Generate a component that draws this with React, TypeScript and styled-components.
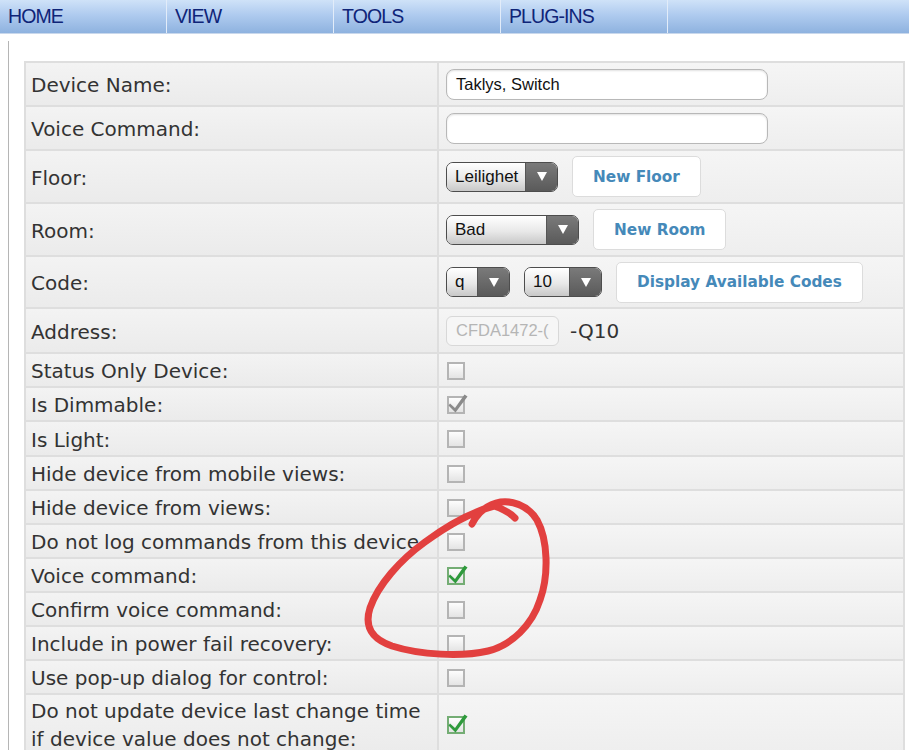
import React from 'react';
import styled, { createGlobalStyle } from 'styled-components';

const GlobalStyle = createGlobalStyle`
  html, body {
    margin: 0;
    padding: 0;
    background: #fff;
    font-family: "DejaVu Sans", Verdana, sans-serif;
  }
`;

const Page = styled.div`
  width: 909px;
  height: 750px;
  overflow: hidden;
  position: relative;
  background: #fff;
`;

const NavBar = styled.div`
  display: flex;
  height: 33px;
  background: linear-gradient(to bottom, #cfe2f8 0%, #afcbef 45%, #8eb2df 100%);
  border-bottom: 1px solid #c9d8ec;
`;

const NavItem = styled.div<{ $last?: boolean }>`
  box-sizing: border-box;
  width: ${p => (p.$last ? 'auto' : '167px')};
  flex: ${p => (p.$last ? '1' : 'none')};
  padding-left: 8px;
  display: flex;
  align-items: center;
  border-right: ${p => (p.$last ? 'none' : '1px solid #e2ecf9')};
  font-family: "Liberation Sans", Arial, sans-serif;
  font-size: 19.5px;
  letter-spacing: -0.9px;
  color: #0f2478;
`;

const Body = styled.div`
  margin: 7px 0 0 8px;
  border-left: 1px solid #b5b5b5;
  padding: 20px 0 0 15px;
  height: 720px;
`;

const FormTable = styled.table`
  width: 881px;
  border-collapse: collapse;
  table-layout: fixed;
`;

const Row = styled.tr<{ $h: number }>`
  height: ${p => p.$h}px;
`;

const LabelCell = styled.td`
  padding: 2px 0 0 5px;
  border: 2px solid #dedede;
  background: linear-gradient(to bottom, #f3f3f3 0%, #ebebeb 100%);
  font-size: 20px;
  line-height: 28px;
  color: #333;
  vertical-align: middle;
  white-space: nowrap;
`;

const ValueCell = styled.td`
  padding: 0 0 0 7px;
  border: 2px solid #dedede;
  background: linear-gradient(to bottom, #f5f5f5 0%, #eeeeee 100%);
  vertical-align: middle;
`;

const Controls = styled.div`
  display: flex;
  align-items: center;
  gap: 14px;
`;

const TextInput = styled.div<{ $disabled?: boolean; $w: number }>`
  width: ${p => p.$w}px;
  height: ${p => (p.$disabled ? 30 : 31)}px;
  box-sizing: border-box;
  border: 1px solid ${p => (p.$disabled ? '#d8d8d8' : '#b8b8b8')};
  border-radius: ${p => (p.$disabled ? '6px' : '8px')};
  background: ${p => (p.$disabled ? '#f6f6f6' : '#fff')};
  box-shadow: ${p => (p.$disabled ? 'none' : 'inset 0 1px 2px rgba(0,0,0,0.12)')};
  padding: 0 9px;
  display: flex;
  align-items: center;
  overflow: hidden;
  white-space: nowrap;
  font-family: "Liberation Sans", Arial, sans-serif;
  font-size: 16.5px;
  color: ${p => (p.$disabled ? '#b5b5b5' : '#111')};
`;

const Suffix = styled.span`
  font-size: 20px;
  color: #333;
  margin-left: -3px;
`;

const Select = styled.div<{ $w: number }>`
  width: ${p => p.$w}px;
  height: 30px;
  box-sizing: border-box;
  border: 1px solid #4d4d4d;
  border-radius: 7px;
  display: flex;
  overflow: hidden;
  font-family: "Liberation Sans", Arial, sans-serif;
  font-size: 17px;
  color: #111;
`;

const SelectText = styled.div`
  flex: 1;
  padding-left: 8px;
  display: flex;
  align-items: center;
  background: linear-gradient(to bottom, #ffffff 0%, #e8e8e8 55%, #c8c8c8 100%);
`;

const SelectArrow = styled.div`
  width: 31px;
  display: flex;
  align-items: center;
  justify-content: center;
  background: linear-gradient(to bottom, #7a7a7a 0%, #5a5a5a 100%);
  border-left: 1px solid #555;
  &::after {
    content: '';
    border-left: 5.5px solid transparent;
    border-right: 5.5px solid transparent;
    border-top: 9px solid #fff;
  }
`;

const Button = styled.div`
  height: 41px;
  box-sizing: border-box;
  padding: 0 20px;
  display: flex;
  align-items: center;
  background: #fff;
  border: 1px solid #dcdcdc;
  border-radius: 5px;
  font-family: "DejaVu Sans", Verdana, sans-serif;
  font-weight: bold;
  font-size: 15.3px;
  color: #4589b9;
  white-space: nowrap;
`;

const CheckSvg = styled.svg`
  display: block;
  margin-top: -3px;
`;

const Annotation = styled.svg`
  position: absolute;
  left: 0;
  top: 0;
  pointer-events: none;
`;

type CheckState = 'off' | 'grey' | 'green';

const Checkbox: React.FC<{ state: CheckState }> = ({ state }) => (
  <CheckSvg width="24" height="24" viewBox="0 0 24 24">
    <defs>
      <linearGradient id={`cb-${state}`} x1="0" y1="0" x2="0" y2="1">
        <stop offset="0" stopColor="#ffffff" />
        <stop offset="1" stopColor="#e2e2e2" />
      </linearGradient>
    </defs>
    <rect
      x="2"
      y="6"
      width="16"
      height="16"
      fill={`url(#cb-${state})`}
      stroke={state === 'green' ? '#74ad74' : '#b4b4b4'}
      strokeWidth="2"
    />
    {state !== 'off' && (
      <path
        d="M4 12.5 L9 17 L18.5 3.5 L21.5 5.5 L9.5 21.5 L2.5 14.5 Z"
        fill={state === 'green' ? '#2e9a3c' : '#8a8a8a'}
      />
    )}
  </CheckSvg>
);

const checkRows: { label: React.ReactNode; state: CheckState; h: number }[] = [
  { label: 'Status Only Device:', state: 'off', h: 34 },
  { label: 'Is Dimmable:', state: 'grey', h: 34 },
  { label: 'Is Light:', state: 'off', h: 35 },
  { label: 'Hide device from mobile views:', state: 'off', h: 34 },
  { label: 'Hide device from views:', state: 'off', h: 34 },
  { label: 'Do not log commands from this device', state: 'off', h: 34 },
  { label: 'Voice command:', state: 'green', h: 34 },
  { label: 'Confirm voice command:', state: 'off', h: 34 },
  { label: 'Include in power fail recovery:', state: 'off', h: 34 },
  { label: 'Use pop-up dialog for control:', state: 'off', h: 34 },
  {
    label: (
      <>
        Do not update device last change time
        <br />
        if device value does not change:
      </>
    ),
    state: 'green',
    h: 60,
  },
];

const App: React.FC = () => {
  return (
    <Page>
      <GlobalStyle />
      <NavBar>
        <NavItem>HOME</NavItem>
        <NavItem>VIEW</NavItem>
        <NavItem>TOOLS</NavItem>
        <NavItem>PLUG-INS</NavItem>
        <NavItem $last />
      </NavBar>
      <Body>
        <FormTable>
          <colgroup>
            <col style={{ width: 413 }} />
            <col />
          </colgroup>
          <tbody>
            <Row $h={44}>
              <LabelCell>Device Name:</LabelCell>
              <ValueCell>
                <TextInput $w={322}>Taklys, Switch</TextInput>
              </ValueCell>
            </Row>
            <Row $h={44}>
              <LabelCell>Voice Command:</LabelCell>
              <ValueCell>
                <TextInput $w={322} />
              </ValueCell>
            </Row>
            <Row $h={53}>
              <LabelCell>Floor:</LabelCell>
              <ValueCell>
                <Controls>
                  <Select $w={112}>
                    <SelectText>Leilighet</SelectText>
                    <SelectArrow />
                  </Select>
                  <Button>New Floor</Button>
                </Controls>
              </ValueCell>
            </Row>
            <Row $h={53}>
              <LabelCell>Room:</LabelCell>
              <ValueCell>
                <Controls>
                  <Select $w={133}>
                    <SelectText>Bad</SelectText>
                    <SelectArrow />
                  </Select>
                  <Button>New Room</Button>
                </Controls>
              </ValueCell>
            </Row>
            <Row $h={52}>
              <LabelCell>Code:</LabelCell>
              <ValueCell>
                <Controls>
                  <Select $w={64}>
                    <SelectText>q</SelectText>
                    <SelectArrow />
                  </Select>
                  <Select $w={78}>
                    <SelectText>10</SelectText>
                    <SelectArrow />
                  </Select>
                  <Button>Display Available Codes</Button>
                </Controls>
              </ValueCell>
            </Row>
            <Row $h={45}>
              <LabelCell>Address:</LabelCell>
              <ValueCell>
                <Controls>
                  <TextInput $w={113} $disabled>
                    CFDA1472-(
                  </TextInput>
                  <Suffix>-Q10</Suffix>
                </Controls>
              </ValueCell>
            </Row>
            {checkRows.map((r, i) => (
              <Row key={i} $h={r.h}>
                <LabelCell>{r.label}</LabelCell>
                <ValueCell>
                  <Checkbox state={r.state} />
                </ValueCell>
              </Row>
            ))}
          </tbody>
        </FormTable>
      </Body>
      <Annotation width="909" height="750" viewBox="0 0 909 750">
        <path
          d="M472 524 C 478 512, 486 506, 496 503 C 510 499, 528 505, 537 520 C 548 540, 549 575, 540 600 C 532 625, 512 645, 488 651 C 462 657, 420 655, 392 646 C 372 639, 364 627, 370 608 C 378 585, 400 560, 425 542 C 448 525, 472 512, 494 506 C 503 509, 510 513, 515 518"
          fill="none"
          stroke="#e2403f"
          strokeWidth="7"
          strokeLinecap="round"
          strokeLinejoin="round"
        />
      </Annotation>
    </Page>
  );
};

export default App;
